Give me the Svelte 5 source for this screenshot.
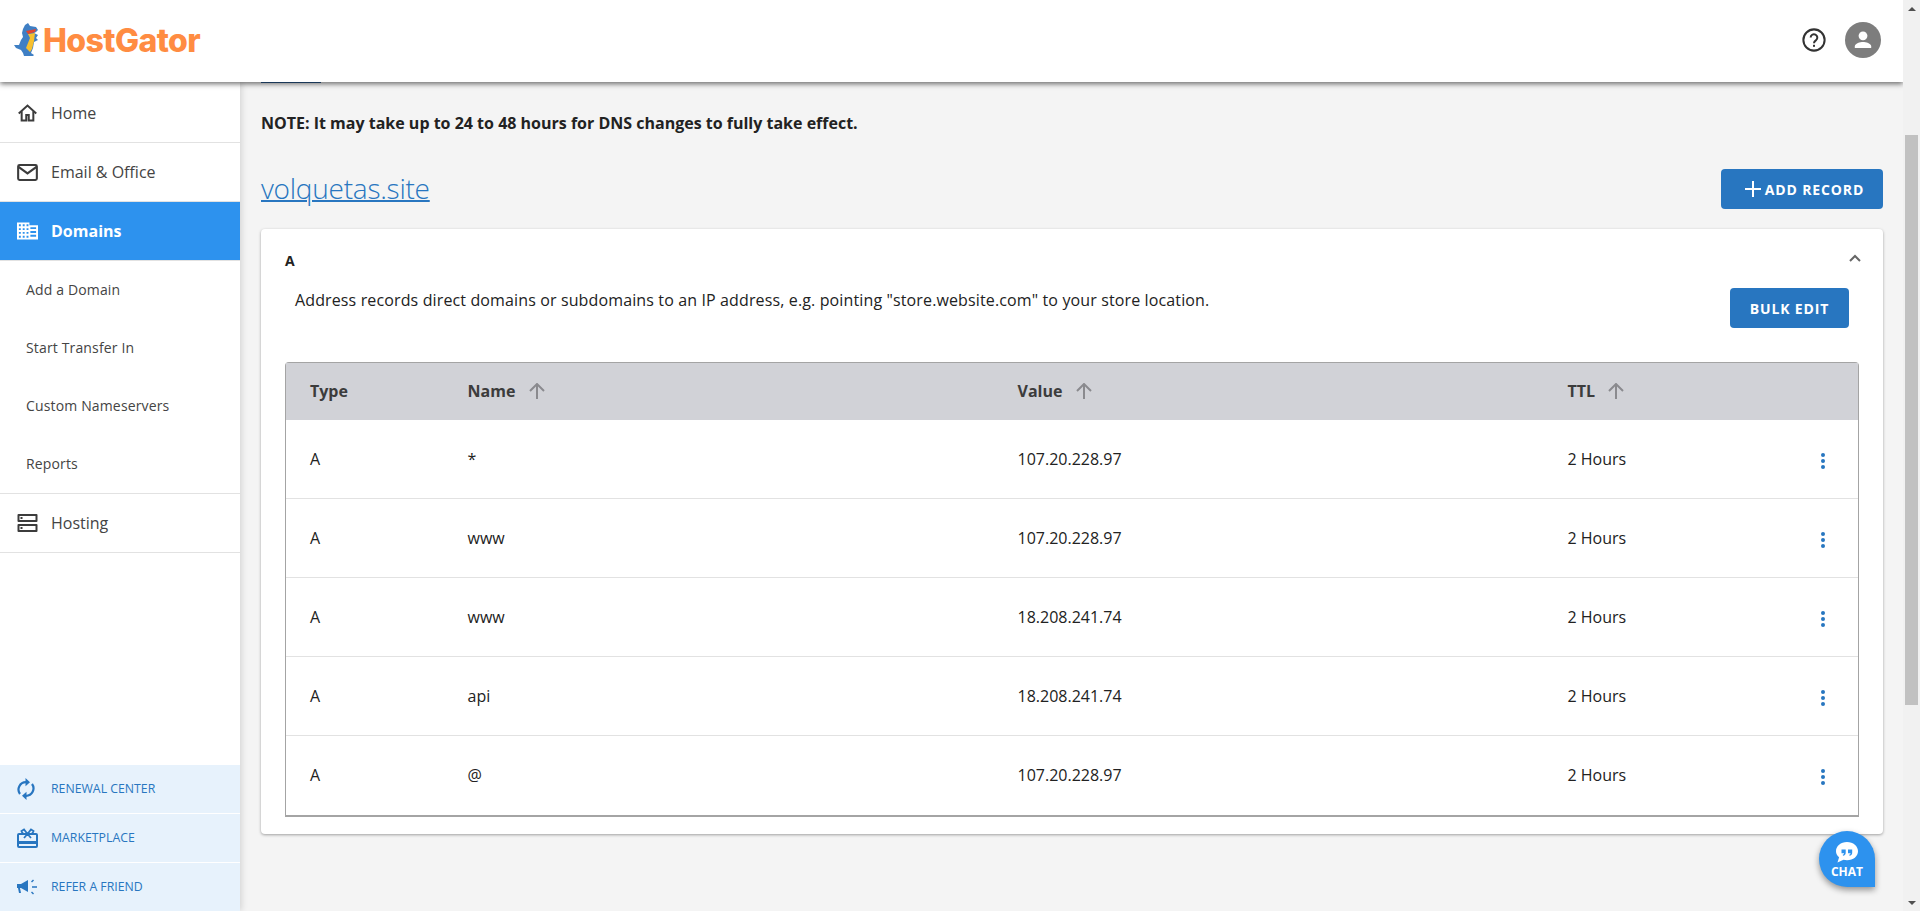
<script>
  let subItems = ["Add a Domain", "Start Transfer In", "Custom Nameservers", "Reports"];

  let rows = [
    { type: "A", name: "*", value: "107.20.228.97", ttl: "2 Hours" },
    { type: "A", name: "www", value: "107.20.228.97", ttl: "2 Hours" },
    { type: "A", name: "www", value: "18.208.241.74", ttl: "2 Hours" },
    { type: "A", name: "api", value: "18.208.241.74", ttl: "2 Hours" },
    { type: "A", name: "@", value: "107.20.228.97", ttl: "2 Hours" }
  ];
</script>

<div class="page">
  <div class="window">
    <header>
      <div class="logo">
        <svg width="27" height="34" viewBox="0 0 27 34">
          <path fill="#3f7fc4" d="M11 2L14 0l2 3 6 1 2 3-2 2-2 1 4 2-2 3 2 2-4 2-1 6-2 5 3 2-1 1H10l-1-3-2-3-5-2-2-3h5l2-5 2-3-1-4 1-4z" />
          <path fill="#f7c02e" d="M14 11l7-1-1 8-2 8-2 3-4-4 2-5 2-5z" />
          <path fill="#e2452f" d="M12 8l10-2-1 3-7 2z" />
        </svg>
        <span class="wordmark">HostGator</span>
      </div>
      <div class="top-icons">
        <svg width="24" height="24" viewBox="0 0 26 26" fill="none" stroke="#333" stroke-width="2.2">
          <circle cx="13" cy="13" r="11.500" />
          <path d="M9.400 10.400a3.600 3.600 0 1 1 5.800 2.800c-1.200.9-2.200 1.500-2.200 3.200" />
          <path d="M13 18.200v2.200" />
        </svg>
        <div class="avatar">
          <svg width="22" height="22" viewBox="0 0 22 22" fill="#fff">
            <circle cx="11" cy="6.800" r="4.400" />
            <path d="M2.800 19v-1.600c0-3 5.400-4.400 8.200-4.400s8.200 1.400 8.200 4.400V19z" />
          </svg>
        </div>
      </div>
    </header>

    <div class="body">
      <aside>
        <nav>
          <a class="nav-item first">
            <svg viewBox="0 0 24 24" height="20" fill="none" stroke="#3c3c3c" stroke-width="2.400">
              <path d="M1.500 12.500L12 3l10.500 9.500" />
              <path d="M5 10v11h5.500v-6.500h3V21H19V10" />
            </svg>
            Home
          </a>
          <a class="nav-item">
            <svg viewBox="0 0 22 18" height="17" fill="none" stroke="#3c3c3c" stroke-width="2.200">
              <rect x="1.100" y="1.100" width="19.800" height="15.800" rx="1.500" />
              <path d="M1.500 3l9.500 7 9.500-7" />
            </svg>
            Email &amp; Office
          </a>
          <a class="nav-item active">
            <svg viewBox="0 0 22 18" height="18" fill="#fff">
              <path fill-rule="evenodd" d="M0 0h13v3h9v15H0zM2 2v2h2V2zm4 0v2h2V2zm4 0v2h2V2zM2 6v2h2V6zm4 0v2h2V6zm4 0v2h2V6zm4-1v2h6V5zM2 10v2h2v-2zm4 0v2h2v-2zm4 0v2h2v-2zm4-1v2h6V9zM2 14v2h2v-2zm4 0v2h2v-2zm4 0v2h2v-2zm4-1v2h6v-2z" />
            </svg>
            Domains
          </a>
          <div class="sub-list">
            {#each subItems as item}
              <a class="sub-item">{item}</a>
            {/each}
          </div>
          <a class="nav-item">
            <svg viewBox="0 0 20 18" height="18" fill="#3c3c3c">
              <path fill-rule="evenodd" d="M1 0h18a1 1 0 0 1 1 1v6a1 1 0 0 1-1 1H1a1 1 0 0 1-1-1V1a1 1 0 0 1 1-1zm1 2v4h16V2zm1 1h2v2H3zM1 10h18a1 1 0 0 1 1 1v6a1 1 0 0 1-1 1H1a1 1 0 0 1-1-1v-6a1 1 0 0 1 1-1zm1 2v4h16v-4zm1 1h2v2H3z" />
            </svg>
            Hosting
          </a>
        </nav>

        <div class="promo">
          <a class="promo-item">
            <svg width="18" height="22" viewBox="0 0 18 22" fill="none" stroke="#2876c0" stroke-width="2.200">
              <path d="M3 16A7.400 7.400 0 0 1 9 4.200" />
              <path d="M15 6A7.400 7.400 0 0 1 9 17.800" />
              <path fill="#2876c0" stroke="none" d="M8.500 0l4.500 4.200-4.500 4zM9.500 22L5 17.800l4.500-4z" />
            </svg>
            RENEWAL CENTER
          </a>
          <a class="promo-item">
            <svg width="21" height="20" viewBox="0 0 21 20" fill="none" stroke="#2876c0" stroke-width="1.800">
              <path fill="#2876c0" stroke="none" fill-rule="evenodd" d="M2 5h17a2 2 0 0 1 2 2v11a2 2 0 0 1-2 2H2a2 2 0 0 1-2-2V7a2 2 0 0 1 2-2zm0 2v6h17V7zm0 9v2h17v-2z" />
              <path d="M10.500 6L7 1.500 4.500 3l1.500 3M10.500 6L14 1.500 16.500 3 15 6M10.500 6L7 10M10.500 6L14 10" />
            </svg>
            MARKETPLACE
          </a>
          <a class="promo-item">
            <svg width="20" height="16" viewBox="0 0 20 16" fill="#2876c0">
              <path d="M0 5h4l7-4v12L4 9H3l1 5H2L1 9H0z" />
              <path d="M15 7.200h5v1.600h-5zM14 2.400l2-2 1 1-2 2zM14 13.600l2 2 1-1-2-2z" />
            </svg>
            REFER A FRIEND
          </a>
        </div>
      </aside>

      <main>
        <div class="tab-line"></div>
        <p class="note">NOTE: It may take up to 24 to 48 hours for DNS changes to fully take effect.</p>

        <div class="domain-row">
          <a class="domain">volquetas.site</a>
          <button class="btn add">
            <svg width="16" height="16" viewBox="0 0 16 16" stroke="#fff" stroke-width="2"><path d="M8 0v16M0 8h16" /></svg>
            ADD RECORD
          </button>
        </div>

        <section class="card">
          <div class="card-title">
            <strong>A</strong>
            <svg width="12" height="8" viewBox="0 0 12 8" fill="none" stroke="#666" stroke-width="2"><path d="M1 7l5-5 5 5" /></svg>
          </div>
          <div class="card-desc">
            <p>Address records direct domains or subdomains to an IP address, e.g. pointing "store.website.com" to your store location.</p>
            <button class="btn bulk">BULK EDIT</button>
          </div>

          <div class="table">
            <div class="tr head">
              <span>Type</span>
              <span>Name <svg class="sort" width="16" height="16" viewBox="0 0 16 16" fill="none" stroke="#8a8a8e" stroke-width="2"><path d="M8 16V1M1 8l7-7 7 7" /></svg></span>
              <span>Value <svg class="sort" width="16" height="16" viewBox="0 0 16 16" fill="none" stroke="#8a8a8e" stroke-width="2"><path d="M8 16V1M1 8l7-7 7 7" /></svg></span>
              <span>TTL <svg class="sort" width="16" height="16" viewBox="0 0 16 16" fill="none" stroke="#8a8a8e" stroke-width="2"><path d="M8 16V1M1 8l7-7 7 7" /></svg></span>
              <span></span>
            </div>
            {#each rows as row}
              <div class="tr">
                <span>{row.type}</span>
                <span>{row.name}</span>
                <span>{row.value}</span>
                <span>{row.ttl}</span>
                <span class="dots"><i></i><i></i><i></i></span>
              </div>
            {/each}
          </div>
        </section>
      </main>
    </div>

    <div class="chat">
      <svg width="24" height="22" viewBox="0 0 24 22">
        <path fill="#fff" d="M12 0c6.300 0 11 4.200 11 9.200s-4.700 9-11 9c-1.200 0-2.400-.2-3.500-.5L2.500 20.500l1.600-5.300C2.100 13.600 1 11.500 1 9.200 1 4.200 5.700 0 12 0z" />
        <path fill="#2d92ee" d="M6.500 7.500h4.200v3.200c0 1.700-1 2.900-2.700 3.100l-.3-1c.9-.2 1.300-.7 1.400-1.500H6.500zM13 7.500h4.200v3.200c0 1.700-1 2.900-2.700 3.100l-.3-1c.9-.2 1.300-.7 1.400-1.500H13z" />
      </svg>
      <span>CHAT</span>
    </div>
  </div>

  <div class="scrollbar">
    <div class="arrow up"></div>
    <div class="track"><div class="thumb"></div></div>
    <div class="arrow down"></div>
  </div>
</div>

<style>
  :global(body) {
    margin: 0;
    font-family: "Open Sans", sans-serif;
    color: #222;
    background: #f4f4f4;
  }
  a {
    cursor: pointer;
  }
  p {
    margin: 0;
  }
  .page {
    display: flex;
    height: 911px;
    overflow: hidden;
  }
  .window {
    flex: 1;
    min-width: 0;
    display: flex;
    flex-direction: column;
    position: relative;
  }

  header {
    height: 82px;
    flex: none;
    box-sizing: border-box;
    background: #fff;
    display: flex;
    align-items: center;
    justify-content: space-between;
    padding: 0 22px 2px 14px;
    box-shadow: 0 2px 5px rgba(0, 0, 0, 0.55);
    position: relative;
    z-index: 2;
  }
  .logo {
    display: flex;
    align-items: center;
    gap: 2px;
  }
  .wordmark {
    font-family: Inter, sans-serif;
    font-weight: 800;
    font-size: 32px;
    letter-spacing: -0.6px;
    color: #ff8c42;
  }
  .top-icons {
    display: flex;
    align-items: center;
    gap: 19px;
  }
  .avatar {
    width: 36px;
    height: 36px;
    border-radius: 50%;
    background: #7d7d7d;
    display: flex;
    align-items: center;
    justify-content: center;
  }

  .body {
    flex: 1;
    display: flex;
    min-height: 0;
  }
  aside {
    width: 240px;
    flex: none;
    background: #fff;
    display: flex;
    flex-direction: column;
    justify-content: space-between;
    box-shadow: 2px 0 6px rgba(0, 0, 0, 0.12);
    position: relative;
    z-index: 1;
  }
  .nav-item {
    height: 58px;
    display: flex;
    align-items: center;
    gap: 13px;
    padding-left: 17px;
    font-size: 16px;
    color: #444;
    border-bottom: 1px solid #e2e2e2;
  }
  .nav-item.first {
    height: 58px;
    padding-top: 2px;
  }
  .nav-item svg {
    width: 21px;
    flex: none;
  }
  .nav-item.active {
    background: #2d92ee;
    color: #fff;
    font-weight: 700;
  }
  .sub-list {
    display: flex;
    flex-direction: column;
    border-bottom: 1px solid #e2e2e2;
  }
  .sub-item {
    height: 56px;
    padding-bottom: 2px;
    display: flex;
    align-items: center;
    padding-left: 26px;
    font-size: 14px;
    letter-spacing: 0.15px;
    color: #444;
  }
  .promo-item {
    height: 47px;
    padding-bottom: 1px;
    display: grid;
    grid-template-columns: 34px 1fr;
    align-items: center;
    padding-left: 17px;
    background: #e7f2fc;
    color: #2876c0;
    font-size: 12.300px;
    border-top: 1px solid #fff;
  }

  main {
    flex: 1;
    min-width: 0;
    padding: 0 20px 0 21px;
  }
  .tab-line {
    width: 60px;
    height: 1px;
    background: #2c5c92;
  }
  .note {
    font-size: 16px;
    font-weight: 700;
    line-height: 22px;
    margin-top: 29px;
  }
  .domain-row {
    display: flex;
    align-items: center;
    justify-content: space-between;
    margin-top: 35px;
    height: 40px;
  }
  .domain {
    font-size: 28px;
    font-weight: 300;
    letter-spacing: -0.25px;
    line-height: 36px;
    margin-top: -2px;
    color: #2876c0;
    text-decoration: underline;
    text-decoration-thickness: 2px;
  }
  .btn {
    border: none;
    background: #2876c0;
    color: #fff;
    font-family: inherit;
    font-weight: 700;
    font-size: 14px;
    letter-spacing: 0.85px;
    height: 40px;
    border-radius: 4px;
    display: flex;
    align-items: center;
    justify-content: center;
  }
  .add {
    width: 162px;
    gap: 4px;
    padding-left: 11px;
  }
  .bulk {
    width: 119px;
    flex: none;
  }
  .card {
    margin-top: 20px;
    background: #fff;
    border-radius: 4px;
    box-shadow: 0 1px 3px rgba(0, 0, 0, 0.35);
    padding: 0 24px 17px;
  }
  .card-title {
    display: flex;
    align-items: center;
    justify-content: space-between;
    padding-top: 22px;
    font-size: 14px;
    line-height: 20px;
    height: 20px;
  }
  .card-title svg {
    margin: -6px -2px 0 0;
  }
  .card-desc {
    display: flex;
    justify-content: space-between;
    padding: 17px 10px 0 10px;
    height: 74px;
    font-size: 16px;
  }
  .card-desc p {
    line-height: 24px;
    letter-spacing: 0.13px;
  }
  .table {
    border: 1px solid #a4a4a4;
    border-bottom-width: 2px;
    border-radius: 4px 4px 0 0;
    font-size: 16px;
  }
  .tr {
    display: grid;
    grid-template-columns: 157.5px 550px 550px 253.500px 1fr;
    align-items: center;
    box-sizing: border-box;
    height: 79px;
    padding-left: 24px;
    border-bottom: 1px solid #e2e2e2;
  }
  .tr:last-child {
    border-bottom-color: transparent;
  }
  .tr.head {
    height: 57px;
    padding-bottom: 1px;
    border-bottom: none;
    background: #d1d2d7;
    font-weight: 700;
    color: #3c3c3c;
  }
  .tr.head .sort {
    margin-left: 9px;
    vertical-align: -2px;
  }
  .dots {
    display: flex;
    flex-direction: column;
    align-items: center;
    gap: 2px;
    width: 4px;
    margin-top: 3px;
  }
  .dots i {
    width: 4px;
    height: 4px;
    border-radius: 50%;
    background: #2876c0;
  }

  .chat {
    position: absolute;
    left: 1819px;
    top: 831px;
    width: 56px;
    height: 56px;
    border-radius: 50% 50% 0 50%;
    background: #2d92ee;
    box-shadow: 0 3px 6px rgba(0, 0, 0, 0.4);
    color: #fff;
    display: flex;
    flex-direction: column;
    align-items: center;
    justify-content: flex-end;
    padding-bottom: 9px;
    box-sizing: border-box;
    z-index: 3;
  }
  .chat span {
    font-size: 12px;
    font-weight: 700;
    line-height: 13px;
    margin-top: 1px;
  }

  .scrollbar {
    width: 17px;
    flex: none;
    background: #f1f1f1;
    display: flex;
    flex-direction: column;
    position: relative;
    z-index: 4;
  }
  .arrow {
    height: 17px;
    flex: none;
    display: flex;
    align-items: center;
    justify-content: center;
  }
  .arrow::after {
    content: "";
    border-left: 4px solid transparent;
    border-right: 4px solid transparent;
  }
  .arrow.up::after {
    border-bottom: 4px solid #505050;
  }
  .arrow.down::after {
    border-top: 4px solid #505050;
  }
  .track {
    flex: 1;
    padding-top: 118px;
  }
  .thumb {
    height: 570px;
    margin: 0 2px;
    background: #c1c1c1;
  }
</style>
